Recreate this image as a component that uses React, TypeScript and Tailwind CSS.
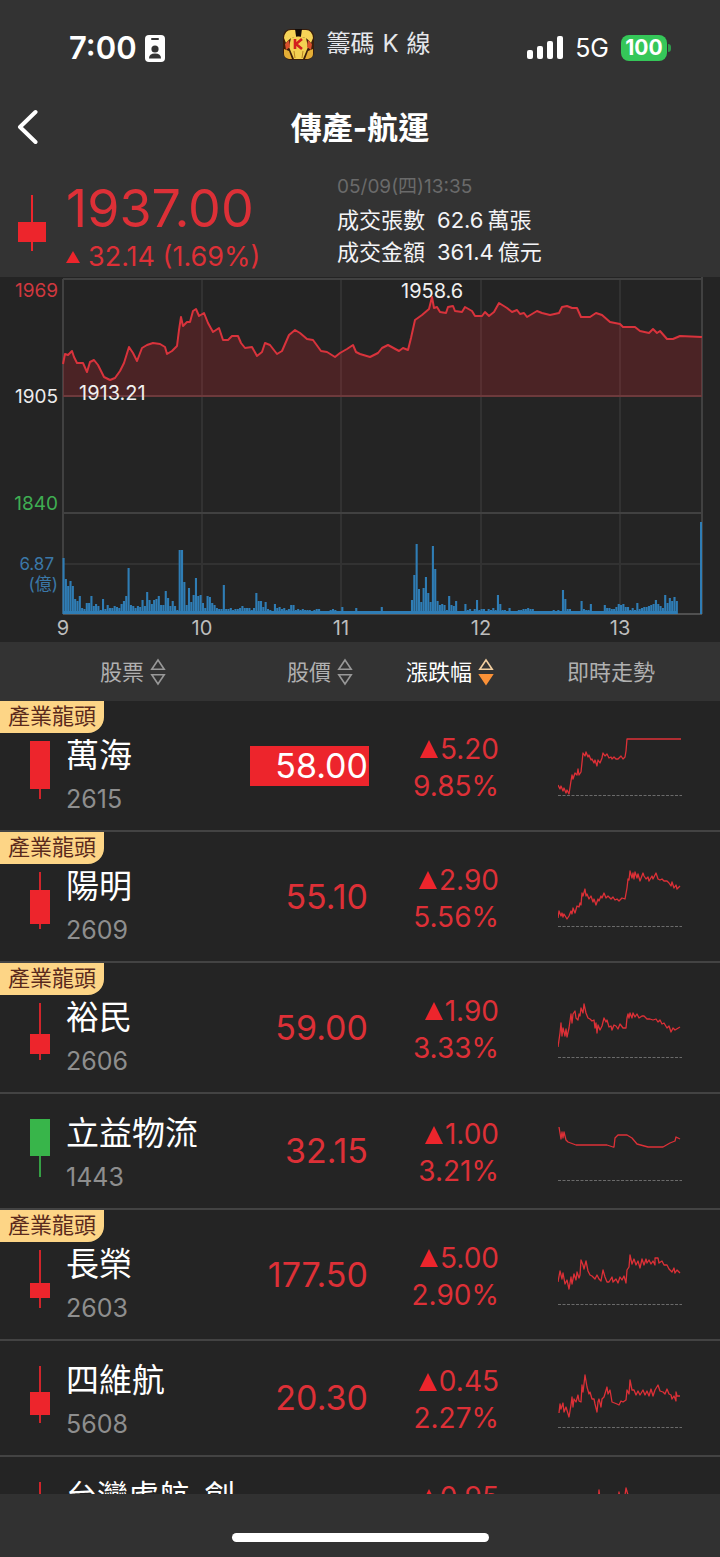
import { clsx } from 'clsx'

type Trend = 'up' | 'down'

interface Candle {
  top: number
  bodyTop: number
  bodyBottom: number
  bottom: number
  trend: Trend
}

interface Stock {
  name: string
  code?: string
  price?: string
  limitUp?: boolean
  change: string
  percent?: string
  leader?: boolean
  smallName?: boolean
  candle: Candle
  spark: string
}

const STOCKS: Stock[] = [
  {
    name: '萬海',
    code: '2615',
    price: '58.00',
    limitUp: true,
    change: '5.20',
    percent: '9.85%',
    leader: true,
    candle: { top: 0, bodyTop: 0, bodyBottom: 48, bottom: 58, trend: 'up' },
    spark:
      '0,54 2,58 3,55 5,60 6,57 8,62 9,59 11,63 13,50 14,44 15,48 17,42 19,44 20,38 21,44 23,41 25,22 27,25 28,21 30,26 31,24 33,29 34,28 36,32 37,29 39,35 40,29 42,32 44,27 45,22 47,25 49,23 51,27 53,26 54,28 56,26 58,28 60,28 63,25 65,28 67,26 68,20 69,8 123,8',
  },
  {
    name: '陽明',
    code: '2609',
    price: '55.10',
    change: '2.90',
    percent: '5.56%',
    leader: true,
    candle: { top: 0, bodyTop: 18, bodyBottom: 52, bottom: 57, trend: 'up' },
    spark:
      '0,56 1,49 3,54 4,51 5,55 6,52 9,57 11,54 13,49 14,52 15,46 17,51 19,44 21,45 22,41 23,43 24,31 25,34 27,27 28,34 29,32 31,37 33,34 35,40 36,37 38,43 40,37 41,39 43,34 44,36 46,31 48,36 50,34 53,37 55,35 57,38 59,37 61,39 64,36 67,37 69,26 70,17 71,18 72,9 74,16 75,11 76,17 77,10 79,16 80,12 82,19 85,11 86,14 88,17 90,15 91,19 94,14 95,17 98,11 100,17 102,18 104,17 106,19 109,19 111,21 113,24 114,20 116,26 118,23 119,27 122,24',
  },
  {
    name: '裕民',
    code: '2606',
    price: '59.00',
    change: '1.90',
    percent: '3.33%',
    leader: true,
    candle: { top: 0, bodyTop: 31, bodyBottom: 51, bottom: 57, trend: 'up' },
    spark:
      '0,54 2,40 3,30 4,43 5,35 7,43 8,36 9,44 11,35 13,21 14,30 15,21 17,18 18,25 20,27 21,21 22,23 23,15 25,20 26,11 28,20 30,25 32,26 34,28 36,27 37,35 38,30 39,40 40,32 42,37 44,33 46,25 48,29 49,27 51,34 53,33 54,37 56,32 58,33 60,36 62,31 65,35 68,35 69,25 70,21 71,25 72,20 74,25 75,20 77,24 79,21 81,25 84,23 86,23 89,26 92,26 95,27 98,26 100,29 102,27 104,31 106,30 109,35 111,33 113,39 115,35 117,37 122,34',
  },
  {
    name: '立益物流',
    code: '1443',
    price: '32.15',
    change: '1.00',
    percent: '3.21%',
    candle: { top: 0, bodyTop: 0, bodyBottom: 37, bottom: 58, trend: 'down' },
    spark:
      '1,11 3,23 4,16 5,22 6,16 8,24 10,26 18,29 49,29 55,31 56,31 57,22 60,19 69,19 74,22 79,28 90,31 105,31 112,27 117,25 118,21 122,23',
  },
  {
    name: '長榮',
    code: '2603',
    price: '177.50',
    change: '5.00',
    percent: '2.90%',
    leader: true,
    candle: { top: 0, bodyTop: 33, bodyBottom: 48, bottom: 58, trend: 'up' },
    spark:
      '0,42 2,31 4,39 5,33 7,44 9,40 11,49 13,37 14,44 16,34 18,40 19,32 21,38 22,35 23,20 25,25 26,29 28,21 30,31 32,35 34,36 37,39 39,35 41,39 43,41 45,30 47,37 49,42 51,42 54,37 55,42 58,39 60,43 62,37 64,40 66,36 68,43 69,30 71,27 72,15 74,24 76,19 78,25 80,21 82,28 84,19 86,25 88,19 89,23 91,20 93,24 95,21 97,25 97,18 100,18 101,23 104,21 106,25 109,25 111,29 114,32 116,28 117,33 119,30 122,33',
  },
  {
    name: '四維航',
    code: '5608',
    price: '20.30',
    change: '0.45',
    percent: '2.27%',
    candle: { top: 0, bodyTop: 26, bodyBottom: 49, bottom: 57, trend: 'up' },
    spark:
      '1,50 2,41 3,46 5,40 6,49 8,44 11,54 13,42 14,34 15,44 16,36 18,39 20,32 21,38 23,39 24,22 25,29 26,21 27,12 29,24 31,31 32,29 34,36 36,36 37,41 39,49 40,39 41,36 43,44 44,36 46,34 49,24 50,31 52,27 54,39 59,41 61,42 63,38 65,39 68,37 69,27 71,31 72,17 74,27 76,27 78,32 80,28 82,32 85,27 87,32 89,28 91,33 93,26 95,33 97,27 100,22 102,28 105,29 107,31 109,26 111,31 113,32 114,36 116,33 118,38 118,29 119,33 122,33',
  },
  {
    name: '台灣虛航-創',
    change: '0.95',
    smallName: true,
    candle: { top: 0, bodyTop: 30, bodyBottom: 50, bottom: 57, trend: 'up' },
    spark: '0,40 10,36 22,30 36,34 40,24 41,11 43,28 52,30 60,20 61,13 63,24 67,16 68,9 70,16 72,26 90,30 122,32',
  },
]

// price line inside the 720x365 chart box
const PRICE_LINE =
  '63,87 65,77 68,78 72,74 74,80 77,86 83,86 87,95 90,85 94,83 98,88 101,94 104,100 110,103 115,101 120,94 124,86 129,70 133,76 137,84 142,71 147,68 153,66 160,67 165,70 167,77 172,74 177,69 179,53 181,40 183,49 187,45 190,45 193,34 196,32 199,39 204,36 208,46 213,55 219,51 223,63 228,63 232,59 238,59 241,66 245,71 252,70 257,79 262,75 265,66 270,68 277,77 282,74 289,58 295,53 300,56 307,62 313,63 321,74 327,75 335,80 340,76 347,72 353,68 356,75 360,77 370,80 378,76 382,71 388,68 399,74 403,71 408,73 411,61 415,43 422,38 429,32 432,20 434,31 437,30 440,35 446,36 448,30 453,29 455,34 462,35 465,30 472,34 475,39 482,39 485,35 489,39 494,35 499,26 507,31 512,35 517,33 520,37 524,36 527,40 537,34 542,36 550,38 559,36 562,30 567,29 572,31 577,31 581,40 590,40 596,36 602,38 610,45 620,47 623,50 635,50 640,54 649,56 653,52 657,56 660,54 667,62 673,62 680,59 702,60'

// one bar per minute from 09:00
const VOLUMES = [
  56, 35, 28, 33, 28, 15, 13, 18, 6, 5, 11, 11, 18, 8, 10, 8, 4, 15, 5, 9, 6, 6, 8, 7, 6, 10, 13, 18, 46, 9, 8, 6, 8, 7,
  14, 8, 22, 14, 10, 14, 15, 18, 9, 9, 23, 16, 8, 13, 8, 4, 64, 64, 32, 9, 26, 12, 19, 36, 18, 19, 11, 6, 18, 17, 11, 9,
  6, 5, 5, 29, 5, 5, 6, 4, 5, 5, 6, 8, 6, 6, 6, 4, 6, 21, 13, 13, 7, 12, 5, 4, 3, 10, 6, 7, 5, 6, 4, 5, 9, 9, 4, 5, 4,
  5, 4, 4, 4, 3, 4, 5, 5, 3, 3, 3, 3, 4, 5, 4, 3, 3, 7, 3, 2, 2, 3, 3, 6, 3, 3, 3, 2, 3, 2, 3, 2, 2, 2, 7, 1, 1, 1, 1,
  1, 1, 1, 1, 1, 2, 3, 3, 14, 39, 70, 25, 12, 26, 37, 21, 12, 68, 45, 13, 9, 10, 9, 4, 18, 9, 8, 13, 3, 3, 2, 10, 4, 5,
  3, 5, 14, 4, 5, 5, 3, 5, 4, 6, 4, 19, 10, 4, 4, 3, 6, 3, 3, 3, 4, 4, 5, 5, 6, 5, 5, 2, 3, 3, 2, 2, 3, 3, 3, 4, 2, 4,
  3, 24, 15, 5, 5, 2, 3, 2, 2, 13, 5, 4, 4, 10, 3, 2, 3, 3, 3, 9, 6, 6, 5, 5, 7, 10, 9, 10, 7, 7, 4, 6, 4, 11, 5, 6, 7,
  7, 8, 9, 10, 14, 10, 8, 6, 19, 11, 16, 13, 17, 13,
]

const HOURS = [
  { label: '9', x: 63 },
  { label: '10', x: 202 },
  { label: '11', x: 341 },
  { label: '12', x: 481 },
  { label: '13', x: 620 },
]

function AppLogo() {
  return (
    <svg viewBox="0 0 31 31" className="h-[31px] w-[31px]" aria-hidden="true">
      <rect width="31" height="31" rx="8" fill="#3a1d0a" />
      <path d="M1 9 Q2 1 8 1 H13 L13 8 Q7 8 3 14Z" fill="#f6d458" />
      <path d="M30 9 Q29 1 23 1 H18 L18 8 Q24 8 28 14Z" fill="#f6d458" />
      <path d="M8 9 Q15 6 23 9 L25 18 L20 30 H11 L6 18Z" fill="#f3d052" />
      <path d="M2 15 L6 11 L7 18 L3 21Z" fill="#d9502c" />
      <path d="M29 15 L25 11 L24 18 L28 21Z" fill="#d9502c" />
      <path d="M1 20 L6 22 L9 30 H6 Q1 29 1 25Z" fill="#e4ae36" />
      <path d="M30 20 L25 22 L22 30 H25 Q30 29 30 25Z" fill="#e4ae36" />
      <path d="M12 0 H19 L18 7 H13Z" fill="#120c08" />
      <path d="M11 22 L12 29 M20 22 L19 29" stroke="#b98322" strokeWidth="1" />
      <path d="M12 10 V20 M19 10 L13 15 L19 20" fill="none" stroke="#d3201f" strokeWidth="2.6" />
    </svg>
  )
}

function StatusBar() {
  return (
    <div className="flex h-[92px] shrink-0 items-center justify-between pr-[49px] pb-1 pl-[69px] text-white">
      <div className="flex w-[180px] items-center gap-2 pt-2">
        <span className="text-[31px] leading-8 font-semibold">7:00</span>
        <svg viewBox="0 0 20 27" className="h-[27px] w-5" aria-hidden="true">
          <rect width="20" height="27" rx="4" fill="#fff" />
          <rect x="6" y="3" width="8" height="2" rx="1" fill="#333" />
          <circle cx="10" cy="14" r="3.6" fill="#333" />
          <path d="M4 23.5 Q4 18.5 10 18.5 Q16 18.5 16 23.5Z" fill="#333" />
        </svg>
      </div>
      <div className="flex items-center gap-3">
        <AppLogo />
        <span className="flex gap-2 text-[24px] leading-8 text-gray-200">
          <span>籌碼</span>
          <span>K</span>
          <span>線</span>
        </span>
      </div>
      <div className="flex w-[206px] items-center justify-end gap-3 pt-2">
        <svg viewBox="0 0 36 24" className="h-6 w-9" fill="#fff" aria-hidden="true">
          <rect x="0" y="14" width="6" height="9" rx="2" />
          <rect x="10" y="10" width="6" height="13" rx="2" />
          <rect x="20" y="5" width="6" height="18" rx="2" />
          <rect x="30" y="0" width="6" height="23" rx="2" />
        </svg>
        <span className="text-[25px] leading-8">5G</span>
        <div className="flex items-center">
          <span className="flex h-[26px] w-[46px] items-center justify-center rounded-lg bg-[#35c759] text-[21px] font-bold">
            100
          </span>
          <span className="ml-px h-2 w-[3px] rounded-r-full bg-[#2f9a4b]" />
        </div>
      </div>
    </div>
  )
}

function NavBar() {
  return (
    <header className="grid h-[70px] shrink-0 grid-cols-[60px_1fr_60px] items-center text-white">
      <button type="button" aria-label="返回" className="flex h-full items-center pl-4">
        <svg viewBox="0 0 22 36" className="h-9 w-[22px]" fill="none" stroke="#fff" strokeWidth="4">
          <path d="M19.5 3 L4 18 L19.5 33" strokeLinecap="round" strokeLinejoin="round" />
        </svg>
      </button>
      <h1 className="pt-0.5 text-center text-[31px] leading-9 font-bold">傳產-航運</h1>
    </header>
  )
}

function Summary() {
  return (
    <section className="flex h-[115px] shrink-0 pl-[18px]">
      <svg viewBox="0 0 28 56" className="mt-[33px] h-14 w-7" fill="#ed252c" aria-hidden="true">
        <rect x="13" y="0" width="2" height="56" />
        <rect x="0" y="27" width="28" height="20" />
      </svg>
      <div className="ml-5 w-[271px] pt-5 text-[#dd3037]">
        <p className="text-[52px] leading-[54px]">1937.00</p>
        <p className="flex items-center gap-2 text-[27px] leading-[42px]">
          <svg viewBox="0 0 14 12" className="h-3 w-[14px]" fill="#ed252c" aria-hidden="true">
            <path d="M7 0 L14 12 H0Z" />
          </svg>
          32.14 (1.69%)
        </p>
      </div>
      <div className="pt-3 text-[22px] leading-8 text-gray-100">
        <p className="text-[19px] leading-[26px] text-[#6a6a6a]">05/09(四)13:35</p>
        <dl className="mt-1 grid grid-cols-[auto_1fr] gap-x-3">
          <dt>成交張數</dt>
          <dd className="flex gap-1">
            62.6<span>萬張</span>
          </dd>
          <dt>成交金額</dt>
          <dd className="flex gap-1">
            361.4<span>億元</span>
          </dd>
        </dl>
      </div>
    </section>
  )
}

function IntradayChart() {
  return (
    <svg viewBox="0 0 720 365" className="block h-auto w-full shrink-0 bg-[#242424]" role="img" aria-label="即時走勢">
      <g stroke="#414141" strokeWidth="2" fill="none">
        <path d="M202 2 V337 M341 2 V337 M481 2 V337 M620 2 V337 M63 287 H702" stroke="#323232" />
        <path d="M63 2 H702 M63 236 H702 M63 2 V337 M702 0 V337" />
        <path d="M63 337 H702" stroke="#505050" />
      </g>
      <polygon points={`63,119 ${PRICE_LINE} 702,119`} fill="#ed252c" fillOpacity="0.2" />
      <path d="M63 119 H702" stroke="#6d3a3c" strokeWidth="2" />
      <polyline points={PRICE_LINE} fill="none" stroke="#d9333c" strokeWidth="2" strokeLinejoin="round" />
      <g fill="#2f7db5">
        {VOLUMES.map((h, i) => (
          <rect key={i} x={62.5 + i * 2.323} y={337 - h} width="2.1" height={h} />
        ))}
        <rect x="63" y="334" width="614" height="3" />
        <rect x="700" y="245" width="2" height="92" />
      </g>
      <g fontSize="19" textAnchor="end">
        <text x="58" y="20" fill="#d0383f">1969</text>
        <text x="58" y="126" fill="#ececec">1905</text>
        <text x="58" y="233" fill="#3fae52">1840</text>
        <text x="54" y="293" fontSize="17" fill="#3b78a8">6.87</text>
        <text x="58" y="313" fontSize="17" fill="#3b78a8">(億)</text>
      </g>
      <g fontSize="20" fill="#f0f0f0">
        <text x="79" y="123">1913.21</text>
        <text x="401" y="21">1958.6</text>
      </g>
      <g fontSize="20" textAnchor="middle" fill="#bdbdbd">
        {HOURS.map((hour) => (
          <text key={hour.label} x={hour.x} y="358">
            {hour.label}
          </text>
        ))}
      </g>
    </svg>
  )
}

function SortIcon({ active }: { active?: boolean }) {
  return (
    <svg viewBox="0 0 16 28" className="h-7 w-4" fill="none" strokeWidth="1.6" aria-hidden="true">
      <path d="M8 2 L14.2 11.2 H1.8Z" stroke={active ? '#f3cfa0' : '#989898'} />
      <path d="M8 26 L14.2 16.8 H1.8Z" stroke={active ? '#fb9137' : '#989898'} fill={active ? '#fb9137' : 'none'} />
    </svg>
  )
}

function SortButton({ label, active }: { label: string; active?: boolean }) {
  return (
    <button type="button" className={clsx('inline-flex items-center gap-1.5 align-middle', active && 'text-white')}>
      {label}
      <SortIcon active={active} />
    </button>
  )
}

function CandleStick({ candle }: { candle: Candle }) {
  return (
    <svg
      viewBox="0 0 20 58"
      className="h-[58px] w-5 shrink-0"
      fill={candle.trend === 'up' ? '#ed252c' : '#38b54a'}
      aria-hidden="true"
    >
      <rect x="9" y={candle.top} width="2" height={candle.bottom - candle.top} opacity="0.85" />
      <rect x="0" y={candle.bodyTop} width="20" height={candle.bodyBottom - candle.bodyTop} />
    </svg>
  )
}

function StockRow({ stock }: { stock: Stock }) {
  return (
    <tr className={clsx('[&>td]:border-b-2 [&>td]:border-[#434343]', stock.leader ? 'h-[131px]' : 'h-[116px]')}>
      <td className={clsx('relative p-0 align-top', stock.leader ? 'pt-10' : 'pt-[25px]')}>
        {stock.leader && (
          <span className="absolute top-0 left-0 h-8 w-[104px] rounded-br-2xl bg-[#fdd586] pl-2 text-[22px] leading-[31px] text-[#5a2a1c]">
            產業龍頭
          </span>
        )}
        <div className="flex gap-4 pl-[30px]">
          <CandleStick candle={stock.candle} />
          <div className="whitespace-nowrap">
            <p className={clsx('-mt-1.5 leading-10 text-white', stock.smallName ? 'text-[31px]' : 'text-[33px]')}>
              {stock.name}
            </p>
            <p className="mt-1 text-[25px] leading-10 text-[#8e8e8e]">{stock.code}</p>
          </div>
        </div>
      </td>
      <td className="p-0 align-middle">
        <span
          className={clsx(
            'block h-10 w-[119px] pr-px text-right text-[34px] leading-10',
            stock.limitUp ? 'bg-[#ed252c] text-white' : 'text-[#dd3037]',
          )}
        >
          {stock.price}
        </span>
      </td>
      <td className="p-0 pt-1 pr-[27px] align-middle text-[28px] leading-[37px] text-[#dd3037]">
        <div className="h-[74px] text-right">
          <p className="flex items-center justify-end gap-0.5">
            <svg viewBox="0 0 18 18" className="h-[18px] w-[18px]" fill="#ed252c" aria-hidden="true">
              <path d="M9 0 L18 18 H0Z" />
            </svg>
            {stock.change}
          </p>
          <p>{stock.percent}</p>
        </div>
      </td>
      <td className="p-0 pl-8 align-middle">
        <svg viewBox="0 0 124 70" className="h-[70px] w-[124px]" fill="none" aria-hidden="true">
          <path d="M0 64.5 H124" stroke="#6a6a6a" strokeDasharray="3 1.5" />
          <polyline points={stock.spark} stroke="#dd3037" strokeWidth="1.3" strokeLinejoin="round" />
        </svg>
      </td>
    </tr>
  )
}

function StockTable() {
  return (
    <div className="min-h-0 flex-1 overflow-y-auto bg-[#242424] [scrollbar-width:none]">
      <table className="w-full table-fixed border-separate border-spacing-0">
        <thead className="sticky top-0 z-10 bg-[#333] text-[22px] text-[#b0b0b0]">
          <tr className="h-[59px]">
            <th className="w-[250px] p-0 pl-4 font-normal">
              <SortButton label="股票" />
            </th>
            <th className="w-[124px] p-0 pl-4 font-normal">
              <SortButton label="股價" />
            </th>
            <th className="w-[152px] p-0 font-normal">
              <SortButton label="漲跌幅" active />
            </th>
            <th className="p-0 pt-0.5 pr-6 font-normal">即時走勢</th>
          </tr>
        </thead>
        <tbody>
          {STOCKS.map((stock) => (
            <StockRow key={stock.name} stock={stock} />
          ))}
        </tbody>
      </table>
    </div>
  )
}

export default function App() {
  return (
    <main
      lang="zh-Hant"
      className="flex h-screen flex-col overflow-hidden bg-[#333] font-['Inter','Noto_Sans_CJK_TC',sans-serif]"
    >
      <StatusBar />
      <NavBar />
      <Summary />
      <IntradayChart />
      <StockTable />
      <footer className="flex h-[63px] shrink-0 items-center justify-center bg-[#313131] pt-6">
        <span className="h-[9px] w-[257px] rounded-full bg-white" />
      </footer>
    </main>
  )
}
